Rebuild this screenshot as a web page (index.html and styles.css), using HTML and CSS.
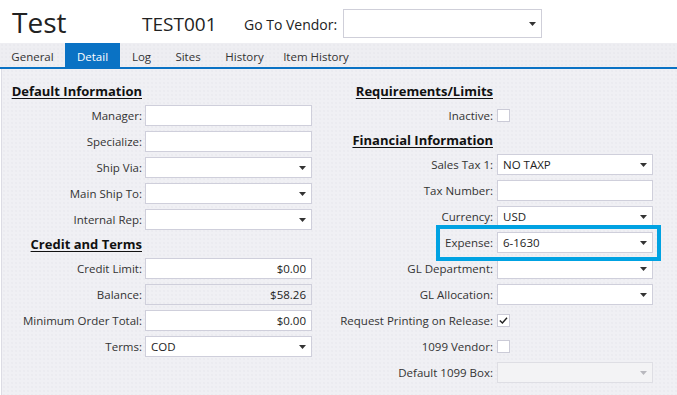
FILE: index.html
```html
<!DOCTYPE html>
<html lang="en">
<head>
<meta charset="utf-8">
<title>Vendor Detail</title>
<link rel="stylesheet" href="styles.css">
</head>
<body>
<div class="header">
  <div class="title">Test</div>
  <div class="code">TEST001</div>
  <div class="goto">Go To Vendor:</div>
  <div class="select goto-select"><span class="val"></span><svg class="arrow" width="7" height="4" viewBox="0 0 7 4"><path d="M0 0h7L3.5 4z"/></svg></div>
</div>
<div class="tabs">
  <div class="tab tab-general">General</div>
  <div class="tab tab-detail active">Detail</div>
  <div class="tab tab-log">Log</div>
  <div class="tab tab-sites">Sites</div>
  <div class="tab tab-history">History</div>
  <div class="tab tab-item">Item History</div>
</div>
<div class="content">
  <div class="col left">
    <div class="heading"><span>Default Information</span></div>
    <div class="row"><span class="label">Manager:</span><div class="input"></div></div>
    <div class="row"><span class="label">Specialize:</span><div class="input"></div></div>
    <div class="row"><span class="label">Ship Via:</span><div class="input select"><span class="val"></span><svg class="arrow" width="7" height="4" viewBox="0 0 7 4"><path d="M0 0h7L3.5 4z"/></svg></div></div>
    <div class="row"><span class="label">Main Ship To:</span><div class="input select"><span class="val"></span><svg class="arrow" width="7" height="4" viewBox="0 0 7 4"><path d="M0 0h7L3.5 4z"/></svg></div></div>
    <div class="row"><span class="label">Internal Rep:</span><div class="input select"><span class="val"></span><svg class="arrow" width="7" height="4" viewBox="0 0 7 4"><path d="M0 0h7L3.5 4z"/></svg></div></div>
    <div class="heading"><span>Credit and Terms</span></div>
    <div class="row"><span class="label">Credit Limit:</span><div class="input num">$0.00</div></div>
    <div class="row"><span class="label">Balance:</span><div class="input num readonly">$58.26</div></div>
    <div class="row"><span class="label">Minimum Order Total:</span><div class="input num">$0.00</div></div>
    <div class="row"><span class="label">Terms:</span><div class="input select"><span class="val">COD</span><svg class="arrow" width="7" height="4" viewBox="0 0 7 4"><path d="M0 0h7L3.5 4z"/></svg></div></div>
  </div>
  <div class="col right">
    <div class="heading"><span>Requirements/Limits</span></div>
    <div class="row"><span class="label">Inactive:</span><div class="check-cell"><span class="check"></span></div></div>
    <div class="heading"><span>Financial Information</span></div>
    <div class="row"><span class="label">Sales Tax 1:</span><div class="input select"><span class="val">NO TAXP</span><svg class="arrow" width="7" height="4" viewBox="0 0 7 4"><path d="M0 0h7L3.5 4z"/></svg></div></div>
    <div class="row"><span class="label">Tax Number:</span><div class="input"></div></div>
    <div class="row"><span class="label">Currency:</span><div class="input select"><span class="val">USD</span><svg class="arrow" width="7" height="4" viewBox="0 0 7 4"><path d="M0 0h7L3.5 4z"/></svg></div></div>
    <div class="row highlighted"><span class="label">Expense:</span><div class="input select"><span class="val">6-1630</span><svg class="arrow" width="7" height="4" viewBox="0 0 7 4"><path d="M0 0h7L3.5 4z"/></svg></div></div>
    <div class="row"><span class="label">GL Department:</span><div class="input select"><span class="val"></span><svg class="arrow" width="7" height="4" viewBox="0 0 7 4"><path d="M0 0h7L3.5 4z"/></svg></div></div>
    <div class="row"><span class="label">GL Allocation:</span><div class="input select"><span class="val"></span><svg class="arrow" width="7" height="4" viewBox="0 0 7 4"><path d="M0 0h7L3.5 4z"/></svg></div></div>
    <div class="row"><span class="label">Request Printing on Release:</span><div class="check-cell"><span class="check"><svg width="13" height="13" viewBox="0 0 13 13"><path d="M2.8 6.4l2.6 2.6L10 3.8" fill="none" stroke="#222" stroke-width="1.4"/></svg></span></div></div>
    <div class="row"><span class="label">1099 Vendor:</span><div class="check-cell"><span class="check"></span></div></div>
    <div class="row"><span class="label">Default 1099 Box:</span><div class="input select disabled"><span class="val"></span><svg class="arrow" width="7" height="4" viewBox="0 0 7 4"><path d="M0 0h7L3.5 4z"/></svg></div></div>
  </div>
</div>
</body>
</html>
```

FILE: styles.css
```css
html, body {
  margin: 0;
  padding: 0;
}
body {
  width: 677px;
  height: 395px;
  overflow: hidden;
  background: #ffffff;
  font-family: "Open Sans", "Noto Sans", sans-serif;
  color: #333333;
}

/* header */
.header {
  height: 43px;
  display: flex;
  align-items: flex-start;
  background: #ffffff;
}
.title {
  width: 130px;
  padding-left: 12px;
  margin-top: 8px;
  font-size: 28px;
  line-height: 28px;
  color: #222222;
}
.code {
  width: 102px;
  margin-top: 15px;
  font-size: 19px;
  line-height: 19px;
  color: #222222;
}
.goto {
  width: 99px;
  margin-top: 17px;
  font-size: 14px;
  line-height: 15px;
  white-space: nowrap;
  color: #222222;
}
.select {
  display: flex;
  align-items: center;
  justify-content: space-between;
}
.goto-select {
  box-sizing: border-box;
  margin-top: 9px;
  width: 199px;
  height: 29px;
  border: 1px solid #cfcfd9;
  background: #ffffff;
  padding: 0 5px;
}
.arrow {
  flex: none;
  fill: #333333;
}

/* tabs */
.tabs {
  display: flex;
  height: 24px;
  border-bottom: 2px solid #0a72c4;
  background-color: #eeeef2;
  background-image: radial-gradient(circle, #e4e4ea 0.6px, transparent 0.8px);
  background-size: 4px 4px;
}
.tab {
  box-sizing: border-box;
  height: 24px;
  padding-top: 4px;
  line-height: 20px;
  font-size: 11.5px;
  text-align: center;
  white-space: nowrap;
  color: #333333;
}
.tab.active {
  background: #0a72c4;
  color: #ffffff;
}
.tab-general { width: 65px; }
.tab-detail { width: 55px; }
.tab-log { width: 43px; }
.tab-sites { width: 50px; }
.tab-history { width: 63px; }
.tab-item { width: 80px; }

/* content */
.content {
  height: 326px;
  box-sizing: border-box;
  display: flex;
  padding-top: 13px;
  border-left: 1px solid #dcdce4;
  margin-left: 1px;
  background-color: #f0f0f4;
  background-image: radial-gradient(circle, #e5e5eb 0.6px, transparent 0.8px);
  background-size: 4px 4px;
}
.col {
  display: flex;
  flex-direction: column;
  gap: 5px;
}
.left {
  width: 310px;
}
.right {
  margin-left: 28px;
  width: 313px;
}
.row {
  display: grid;
  height: 21px;
  align-items: center;
}
.left .row, .left .heading {
  grid-template-columns: 140px 167px;
  column-gap: 3px;
}
.right .row, .right .heading {
  grid-template-columns: 153px 156px;
  column-gap: 4px;
}
.heading {
  display: grid;
  height: 18px;
}
.heading span {
  text-align: right;
  white-space: nowrap;
  font-size: 13px;
  font-weight: 700;
  line-height: 18px;
  color: #111111;
  text-decoration: underline;
  text-underline-offset: 2px;
}
.label {
  text-align: right;
  white-space: nowrap;
  font-size: 11.5px;
  line-height: 21px;
  color: #333333;
}
.input {
  box-sizing: border-box;
  height: 21px;
  border: 1px solid #cfcfdb;
  background: #ffffff;
  padding: 0 5px;
  font-size: 11.5px;
  line-height: 19px;
  color: #222222;
}
.input.num {
  text-align: right;
}
.input.readonly {
  background: transparent;
}
.input.disabled {
  background: #f3f3f5;
  border-color: #dedee4;
}
.input.disabled .arrow {
  fill: #b8b8be;
}
.check-cell {
  display: flex;
  align-items: center;
}
.check {
  box-sizing: border-box;
  width: 13px;
  height: 13px;
  border: 1px solid #cbcbd7;
  background: #ffffff;
  position: relative;
}
.check svg {
  position: absolute;
  left: -1px;
  top: -1px;
}

/* annotation highlight */
.highlighted {
  position: relative;
}
.highlighted::after {
  content: "";
  position: absolute;
  left: 96px;
  top: -7px;
  width: 225px;
  height: 36px;
  box-sizing: border-box;
  border: 4.5px solid #00a2e2;
}
```
